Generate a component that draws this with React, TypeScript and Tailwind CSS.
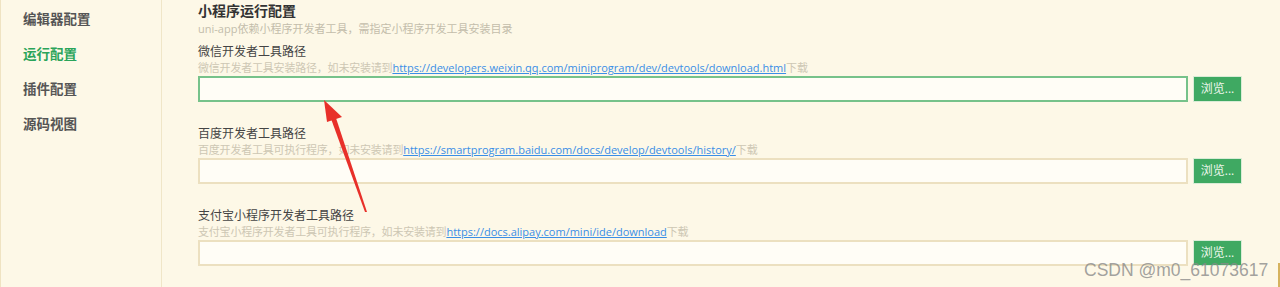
import React from 'react';

const menu = ['编辑器配置', '运行配置', '插件配置', '源码视图'];

const groups = [
  {
    label: '微信开发者工具路径',
    desc: '微信开发者工具安装路径，如未安装请到',
    url: 'https://developers.weixin.qq.com/miniprogram/dev/devtools/download.html',
    focused: true,
  },
  {
    label: '百度开发者工具路径',
    desc: '百度开发者工具可执行程序，如未安装请到',
    url: 'https://smartprogram.baidu.com/docs/develop/devtools/history/',
    focused: false,
  },
  {
    label: '支付宝小程序开发者工具路径',
    desc: '支付宝小程序开发者工具可执行程序，如未安装请到',
    url: 'https://docs.alipay.com/mini/ide/download',
    focused: false,
  },
];

export default function App() {
  return (
    <div
      className="relative flex h-[287px] w-[1280px] overflow-hidden bg-[#fdf8e7] border-l border-[#efe3c2]"
      style={{ fontFamily: '"Open Sans", "Noto Sans CJK SC", sans-serif' }}
    >
      {/* sidebar */}
      <div className="w-[161px] shrink-0 border-r border-[#f0e6c8] pt-[2px]">
        {menu.map((m, i) => (
          <div
            key={m}
            className={`flex h-[35px] items-center pl-[22px] text-[13.5px] font-semibold ${
              i === 1 ? 'text-[#2aa45a]' : 'text-[#555555]'
            }`}
          >
            {m}
          </div>
        ))}
      </div>

      {/* main */}
      <div className="flex-1 pl-[36px] pr-[38px] pt-[1px]">
        <div className="h-[20px] text-[14px] font-semibold leading-[20px] text-[#333333]">小程序运行配置</div>
        <div className="h-[16px] text-[11px] leading-[16px] text-[#c3bdab]">
          uni-app依赖小程序开发者工具，需指定小程序开发工具安装目录
        </div>

        <div className="mt-[7px] flex flex-col gap-[24px]">
          {groups.map((g) => (
            <div key={g.label}>
              <div className="h-[16px] text-[12px] leading-[16px] text-[#444444]">{g.label}</div>
              <div className="h-[16px] whitespace-nowrap text-[11px] leading-[16px] text-[#cdc7b4] tracking-[-0.2px]">
                {g.desc}
                <a className="tracking-normal text-[#3a8ee6] underline">{g.url}</a>
                下载
              </div>
              <div className="flex gap-[5px]">
                <div
                  className={`h-[26px] flex-1 bg-[#fffdf6] border-2 ${
                    g.focused ? 'border-[#76c28a]' : 'border-[#ece0c0]'
                  }`}
                />
                <button className="flex h-[26px] w-[49px] items-center justify-center bg-[#3fa962] text-[12px] text-[#eef7ee] border border-[#d9ecd6]">
                  浏览...
                </button>
              </div>
            </div>
          ))}
        </div>
      </div>

      {/* annotation arrow */}
      <svg className="pointer-events-none absolute left-0 top-0" width="1280" height="287">
        <polygon points="329,116 334,115 366,212 364,212" fill="#e8302a" />
        <polygon points="323,100 341,117 326,122" fill="#e8302a" />
      </svg>

      {/* watermark */}
      <div
        className="pointer-events-none absolute left-[1083px] top-[259px] text-[17.5px] leading-[22px] text-[#8a8a8a]/80"
        style={{ fontFamily: '"Liberation Sans", Arial, sans-serif' }}
      >
        CSDN @m0_61073617
      </div>
      <div className="absolute left-[1277px] top-[263px] h-[24px] w-[3px] bg-[#d6b35e]" />
    </div>
  );
}
